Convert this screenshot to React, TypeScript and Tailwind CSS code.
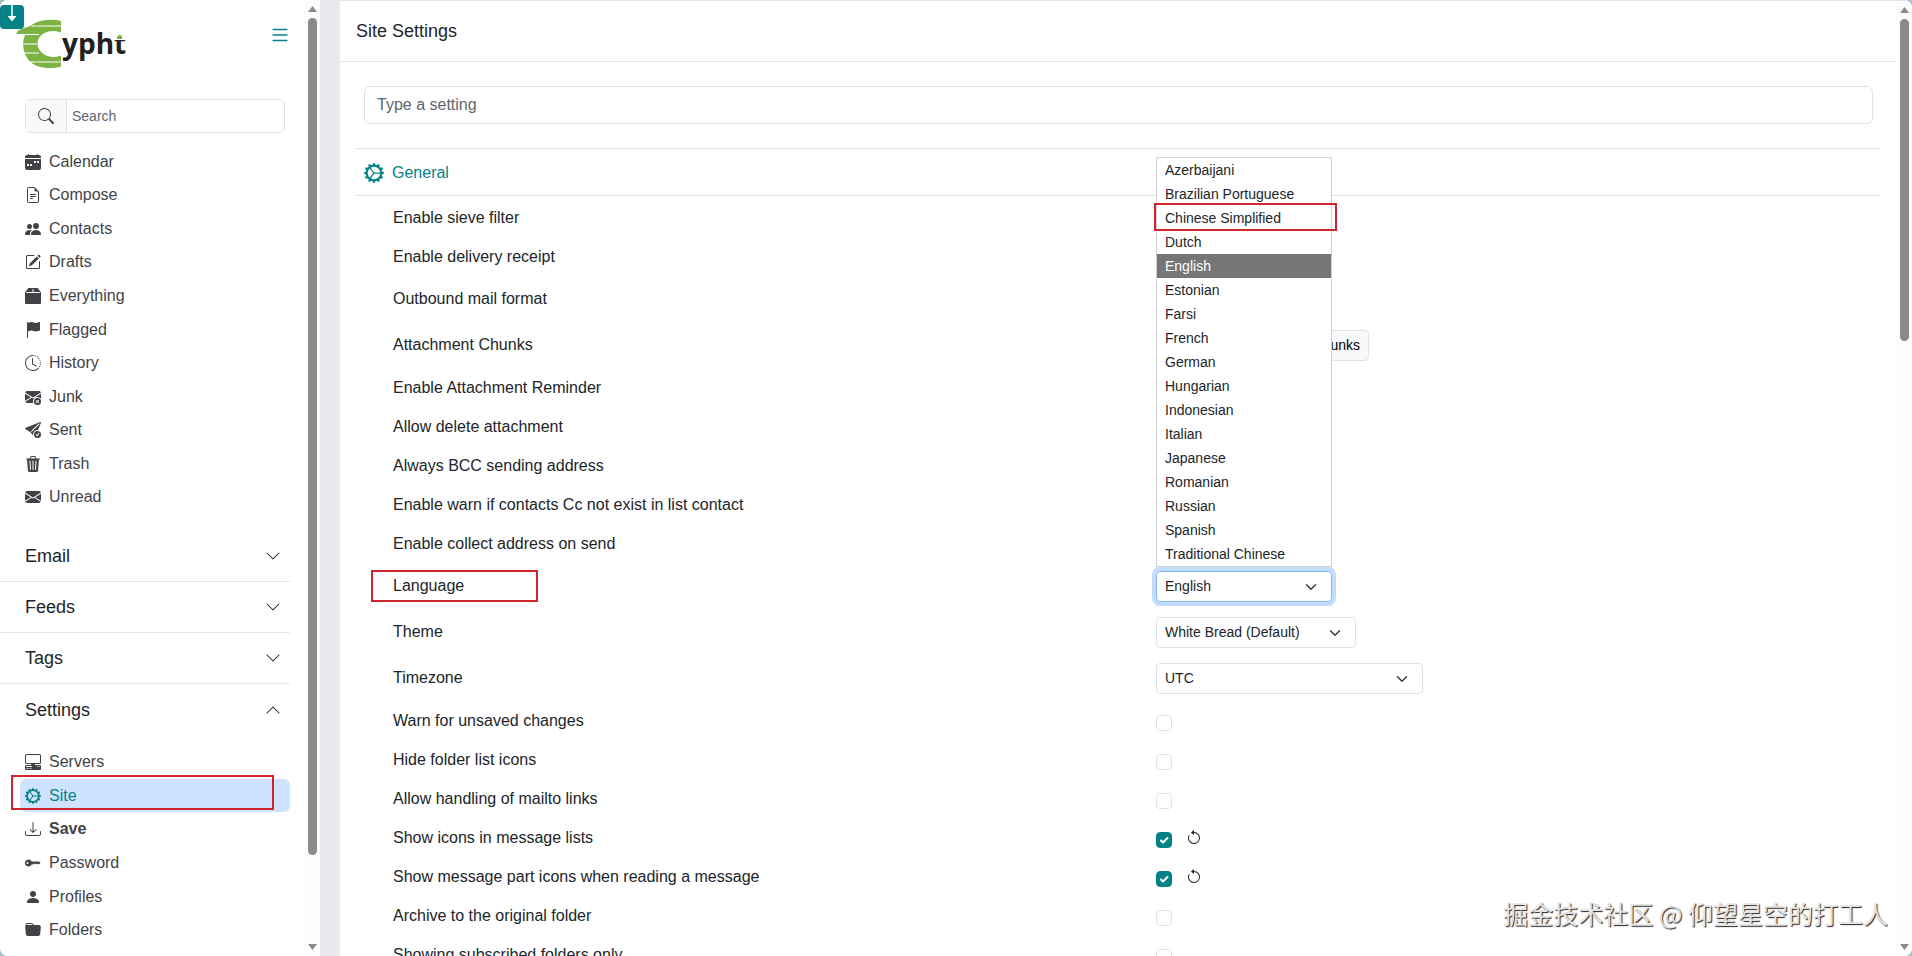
import { ReactNode, useState } from 'react'
import type { IconType } from 'react-icons'
import {
  BsArrowCounterclockwise,
  BsBox2Fill,
  BsCalendarWeekFill,
  BsChevronDown,
  BsChevronUp,
  BsClockHistory,
  BsDownload,
  BsEnvelopeFill,
  BsEnvelopeXFill,
  BsFileEarmarkText,
  BsFlagFill,
  BsFolderFill,
  BsGearWideConnected,
  BsKeyFill,
  BsList,
  BsPcDisplayHorizontal,
  BsPencilSquare,
  BsPeopleFill,
  BsPersonFill,
  BsSearch,
  BsSendCheckFill,
  BsTrash3Fill
} from 'react-icons/bs'

interface NavItem {
  label: string
  icon: IconType
  active?: boolean
  bold?: boolean
}

const MAIN_ITEMS: NavItem[] = [
  { label: 'Calendar', icon: BsCalendarWeekFill },
  { label: 'Compose', icon: BsFileEarmarkText },
  { label: 'Contacts', icon: BsPeopleFill },
  { label: 'Drafts', icon: BsPencilSquare },
  { label: 'Everything', icon: BsBox2Fill },
  { label: 'Flagged', icon: BsFlagFill },
  { label: 'History', icon: BsClockHistory },
  { label: 'Junk', icon: BsEnvelopeXFill },
  { label: 'Sent', icon: BsSendCheckFill },
  { label: 'Trash', icon: BsTrash3Fill },
  { label: 'Unread', icon: BsEnvelopeFill }
]

const SETTINGS_ITEMS: NavItem[] = [
  { label: 'Servers', icon: BsPcDisplayHorizontal },
  { label: 'Site', icon: BsGearWideConnected, active: true },
  { label: 'Save', icon: BsDownload, bold: true },
  { label: 'Password', icon: BsKeyFill },
  { label: 'Profiles', icon: BsPersonFill },
  { label: 'Folders', icon: BsFolderFill }
]

const LANGUAGES = [
  'Azerbaijani',
  'Brazilian Portuguese',
  'Chinese Simplified',
  'Dutch',
  'English',
  'Estonian',
  'Farsi',
  'French',
  'German',
  'Hungarian',
  'Indonesian',
  'Italian',
  'Japanese',
  'Romanian',
  'Russian',
  'Spanish',
  'Traditional Chinese'
]

const Logo = () => (
  <svg width="116" height="56" viewBox="14 16 116 56" role="img" aria-label="Cypht">
    <path d="M61 21C54 19 43 19 35 23C31 25 29 27 26 27.500C22 28 18 30 16 34H25.500C21.500 42 22.500 53 29 60.500C36 68.500 50 69.500 61 66.500V55.500C57 57.500 49 58 43.500 54C35.500 48.500 35.500 38.500 43.500 33.500C49 30 57 30.500 61 32.500Z" fill="#7cb342" />
    <path d="M31 26H61M24 34.500H39M22 44H37M24 53H39M30 62H61" stroke="#fff" strokeWidth="1.200" />
    <text x="62" y="54" fontSize="28" fontWeight="700" fill="#212121" fontFamily="Open Sans, sans-serif">ypht</text>
    <path d="M113 32H127V40H113Z" fill="#fff" />
    <path d="M117 39V37L119 35H121L122 37V39Z" fill="#7cb342" />
  </svg>
)

const Scrollbar = ({ children }: { children: ReactNode }) => (
  <div className="flex h-full w-4 shrink-0 flex-col items-center justify-between bg-[#fcfcfc] py-1.5" aria-hidden="true">
    <svg width="9" height="6" viewBox="0 0 9 6"><path d="M4.500 0L9 6H0Z" fill="#8a8a8a" /></svg>
    <div className="w-full flex-1 py-1.5 flex justify-center">{children}</div>
    <svg width="9" height="6" viewBox="0 0 9 6"><path d="M0 0H9L4.500 6Z" fill="#8a8a8a" /></svg>
  </div>
)

const NavList = ({ items, className }: { items: NavItem[], className: string }) => (
  <ul className={`flex flex-col pl-5 ${className}`}>
    {items.map(({ label, icon: Icon, active, bold }) => (
      <li key={label} className="relative flex-1">
        <a
          href="#"
          className={`flex h-full items-center gap-2 rounded-md pl-[5px] ${active ? 'bg-[#cfe2ff] text-[#038387]' : 'text-[#3f4348]'} ${bold ? 'font-bold' : ''}`}
        >
          <Icon className="h-4 w-4" />
          {label}
        </a>
        {active && <div className="pointer-events-none absolute -top-1 -left-[9px] right-4 h-[35px] border-2 border-[#d0252b]" />}
      </li>
    ))}
  </ul>
)

const Section = ({ label, open }: { label: string, open?: boolean }) => (
  <button
    type="button"
    aria-expanded={!!open}
    className={`flex h-[51px] w-full items-center justify-between pr-[9px] pl-[25px] text-lg text-[#212529] ${open ? '' : 'border-b border-[#e3e5e8]'}`}
  >
    {label}
    {open ? <BsChevronUp className="h-4 w-4" /> : <BsChevronDown className="h-4 w-4" />}
  </button>
)

const Sidebar = () => (
  <aside className="flex w-80 shrink-0 bg-white">
    <div className="flex min-w-0 flex-1 flex-col overflow-hidden">
      <div className="relative flex h-[99px] shrink-0 items-start justify-between pt-4 pr-[13px] pl-3.5">
        <Logo />
        <button type="button" aria-label="Toggle menu" className="pt-2 text-[#038387]">
          <BsList className="h-[22px] w-[22px]" />
        </button>
        <div className="absolute top-[5px] left-0 flex h-6 w-6 justify-center rounded-sm bg-[#038387]">
          <svg width="24" height="24" viewBox="0 0 24 24">
            <path d="M12 0V11" stroke="#fff" strokeWidth="1.500" />
            <path d="M7.500 11H16.500L12.500 16H11.500Z" fill="#fff" />
          </svg>
        </div>
      </div>
      <div className="mr-[19px] ml-[25px] flex h-[34px] shrink-0 overflow-hidden rounded-md border border-[#dee2e6]">
        <label htmlFor="search" aria-label="Search" className="flex w-[41px] items-center justify-center border-r border-[#dee2e6] bg-[#f8f9fa]">
          <BsSearch className="h-4 w-4 text-[#3f4348]" />
        </label>
        <input id="search" placeholder="Search" className="min-w-0 flex-1 px-[5px] text-sm outline-none placeholder:text-[#5f666c]" />
      </div>
      <nav className="shrink-0 pt-3 pr-3.5">
        <NavList items={MAIN_ITEMS} className="h-[369px]" />
        <div className="pt-[17px]">
          <Section label="Email" />
          <Section label="Feeds" />
          <Section label="Tags" />
          <Section label="Settings" open />
        </div>
        <div className="pt-2.5">
          <NavList items={SETTINGS_ITEMS} className="h-[202px]" />
        </div>
      </nav>
    </div>
    <Scrollbar>
      <div className="h-[91%] w-[9px] rounded-full bg-[#8a8a8a]" />
    </Scrollbar>
  </aside>
)

interface RowProps {
  label: string
  id: string
  tall?: boolean
  marked?: boolean
  children?: ReactNode
}

const Row = ({ label, id, tall, marked, children }: RowProps) => (
  <div className={`grid grid-cols-[800fr_725fr] items-center ${tall ? 'h-[46px]' : 'h-[39px]'}`}>
    <div className="relative pl-[37px]">
      <label htmlFor={id}>{label}</label>
      {marked && <div className="pointer-events-none absolute -top-1 left-[15px] h-8 w-[167px] border-2 border-[#d0252b]" />}
    </div>
    <div className="flex items-center">{children}</div>
  </div>
)

const CheckRow = ({ label, on }: { label: string, on?: boolean }) => {
  const [checked, setChecked] = useState(!!on)
  const id = label.toLowerCase().replaceAll(' ', '_')
  return (
    <Row label={label} id={id}>
      <span className="relative mt-1 flex">
        <input
          id={id}
          type="checkbox"
          checked={checked}
          onChange={(e) => setChecked(e.target.checked)}
          className="h-4 w-4 appearance-none rounded border border-[#dee2e6] bg-white checked:border-[#038387] checked:bg-[#038387]"
        />
        {checked && (
          <svg className="pointer-events-none absolute inset-0" width="16" height="16" viewBox="0 0 16 16" fill="none">
            <path d="M5 8.500L7 10.500L11.500 6" stroke="#fff" strokeWidth="2" strokeLinecap="round" strokeLinejoin="round" />
          </svg>
        )}
      </span>
      {on && (
        <button type="button" aria-label="Restore default" className="pl-3.5">
          <BsArrowCounterclockwise className="h-4 w-4" />
        </button>
      )}
    </Row>
  )
}

const SelectBox = ({ id, options, value, className }: { id: string, options: string[], value: string, className: string }) => (
  <div className={`relative ${className}`}>
    <select id={id} defaultValue={value} className="h-[31px] w-full appearance-none rounded border border-inherit bg-white pr-9 pl-2 text-sm outline-none">
      {options.map((o) => (
        <option key={o}>{o}</option>
      ))}
    </select>
    <BsChevronDown className="pointer-events-none absolute top-2.5 right-[15px] h-3 w-3 stroke-[#212529] stroke-1" />
  </div>
)

const LanguageMenu = () => (
  <ul role="listbox" className="absolute bottom-full left-0 z-10 mb-1 w-full border border-[#d0d2d4] bg-white text-sm">
    {LANGUAGES.map((lang) => (
      <li
        key={lang}
        role="option"
        aria-selected={lang === 'English'}
        className={`relative flex h-6 items-center pl-2 ${lang === 'English' ? 'bg-[#767676] text-white' : ''}`}
      >
        {lang}
        {lang === 'Chinese Simplified' && (
          <div className="pointer-events-none absolute -top-[3px] -right-1.5 -bottom-px -left-[3px] border-2 border-[#d0252b]" />
        )}
      </li>
    ))}
  </ul>
)

const Settings = () => (
  <section className="mr-[15px] ml-4 pt-6">
    <div className="flex h-12 items-center gap-2 border-y border-[#dee2e6] pt-0.5 pl-2 text-[#038387]">
      <BsGearWideConnected className="h-5 w-5" />
      General
    </div>
    <div className="pt-0.5">
      <CheckRow label="Enable sieve filter" />
      <CheckRow label="Enable delivery receipt" />
      <Row label="Outbound mail format" id="mail_format" tall />
      <Row label="Attachment Chunks" id="chunks" tall>
        <div className="flex w-[213px] justify-end">
          <button id="chunks" type="button" className="h-[31px] rounded border border-[#dee2e6] bg-[#f8f9fa] px-2 text-sm text-black">
            Clear Chunks
          </button>
        </div>
      </Row>
      <CheckRow label="Enable Attachment Reminder" />
      <CheckRow label="Allow delete attachment" />
      <CheckRow label="Always BCC sending address" />
      <CheckRow label="Enable warn if contacts Cc not exist in list contact" />
      <CheckRow label="Enable collect address on send" />
      <Row label="Language" id="language" tall marked>
        <div className="relative w-44">
          <SelectBox id="language" options={LANGUAGES} value="English" className="rounded border-[#86b7fe] ring-4 ring-[#c2dbfe]" />
          <LanguageMenu />
        </div>
      </Row>
      <Row label="Theme" id="theme" tall>
        <SelectBox id="theme" options={['White Bread (Default)']} value="White Bread (Default)" className="w-[200px] border-[#dee2e6]" />
      </Row>
      <Row label="Timezone" id="timezone" tall>
        <SelectBox id="timezone" options={['UTC']} value="UTC" className="w-[267px] border-[#dee2e6]" />
      </Row>
      <CheckRow label="Warn for unsaved changes" />
      <CheckRow label="Hide folder list icons" />
      <CheckRow label="Allow handling of mailto links" />
      <CheckRow label="Show icons in message lists" on />
      <CheckRow label="Show message part icons when reading a message" on />
      <CheckRow label="Archive to the original folder" />
      <CheckRow label="Showing subscribed folders only" />
    </div>
  </section>
)

export default function App() {
  return (
    <div className="h-screen bg-[#a9c0c4] font-['Liberation_Sans',Arial,sans-serif] text-base text-[#212529]">
      <div className="relative flex h-full gap-5 overflow-hidden rounded-lg bg-[#e9eaed]">
        <Sidebar />
        <main className="flex min-w-0 flex-1 border-t border-[#e3e5e8] bg-white">
          <div className="min-w-0 flex-1 overflow-hidden">
            <header className="flex h-[61px] items-center border-b border-[#e3e5e8] pl-4">
              <h1 className="text-lg">Site Settings</h1>
            </header>
            <div className="pt-6 pr-[23px] pl-6">
              <input
                aria-label="Type a setting"
                placeholder="Type a setting"
                className="h-[38px] w-full rounded-md border border-[#dee2e6] px-3 outline-none placeholder:text-[#5f666c]"
              />
            </div>
            <Settings />
          </div>
          <Scrollbar>
            <div className="h-[35%] w-[9px] rounded-full bg-[#8a8a8a]" />
          </Scrollbar>
        </main>
        <div className="pointer-events-none absolute right-6 bottom-6 z-20 text-[25px] text-[#e4e4e4] font-['Noto_Sans_CJK_SC',sans-serif] [text-shadow:1px_1px_1px_#222]">
          掘金技术社区 @ 仰望星空的打工人
        </div>
      </div>
    </div>
  )
}
